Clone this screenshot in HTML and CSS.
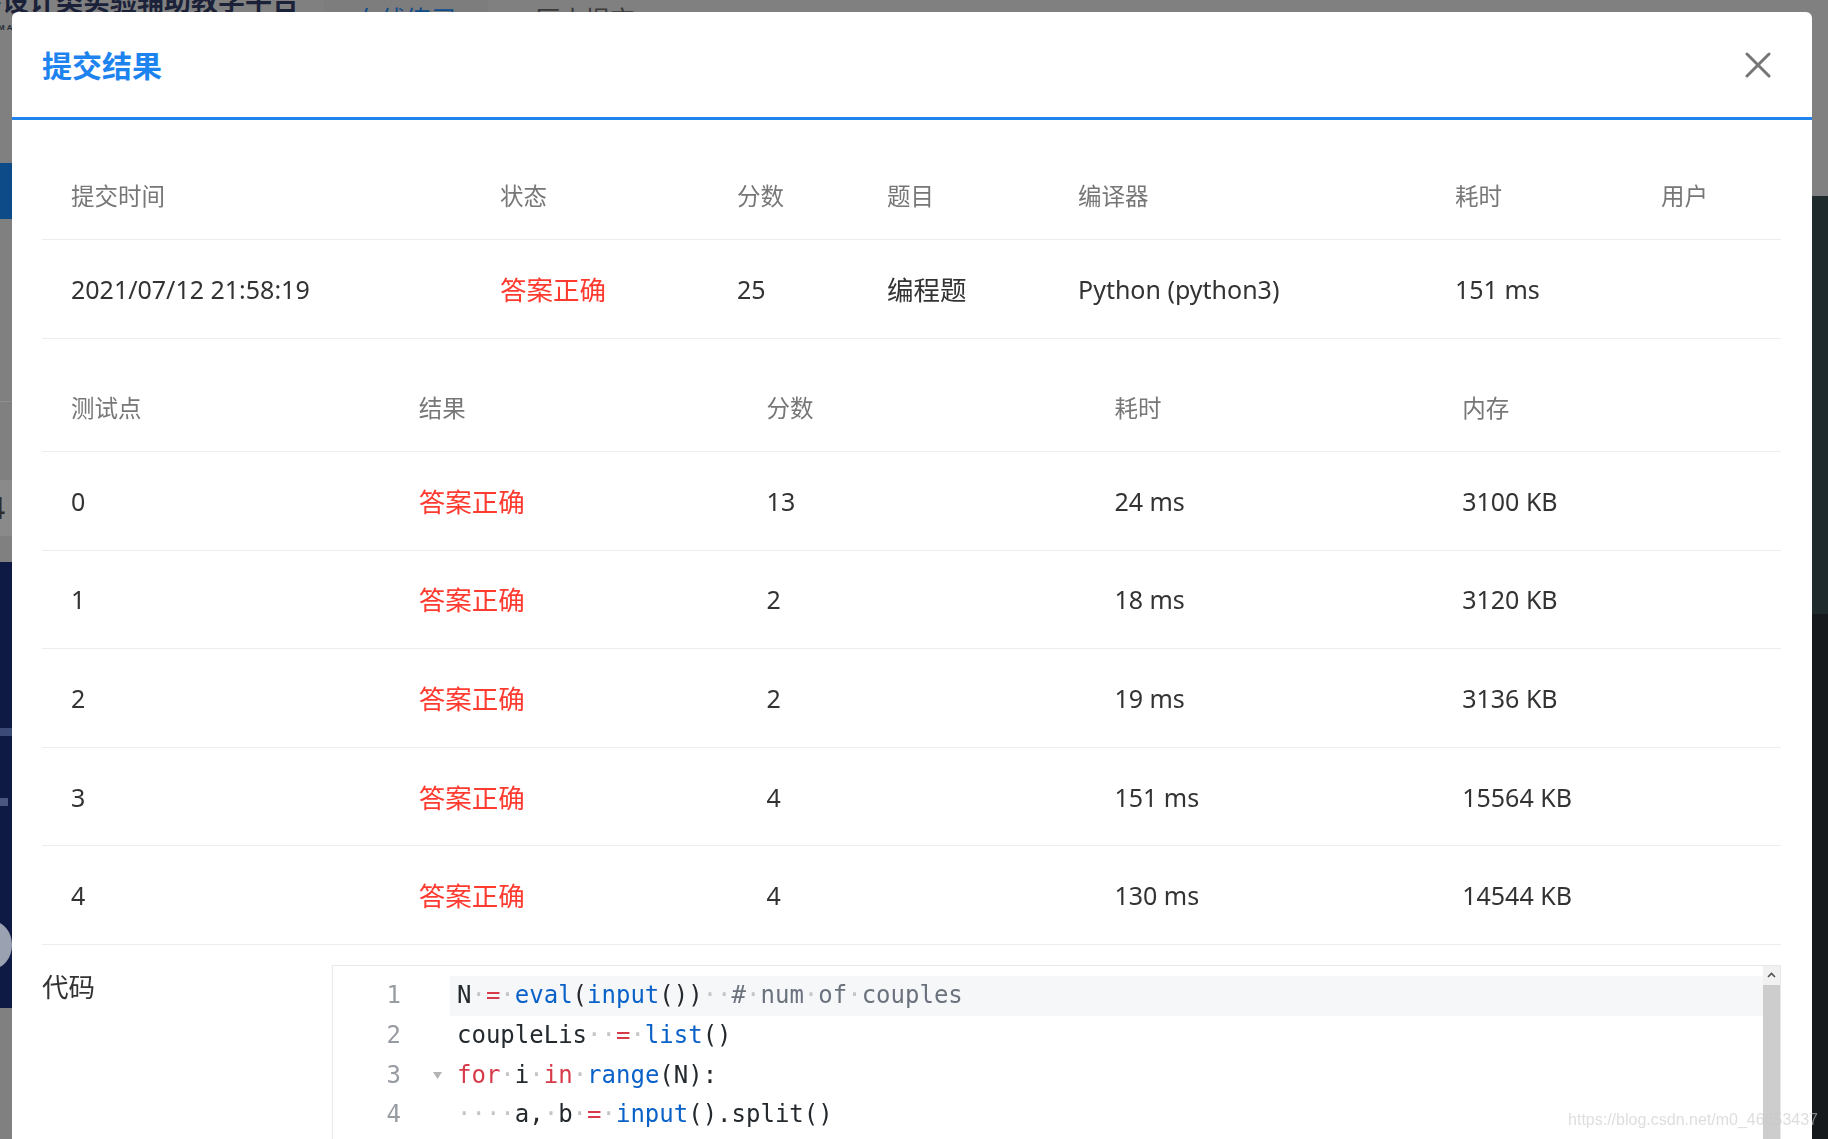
FILE: index.html
```html
<!DOCTYPE html>
<html lang="zh-CN">
<head>
<meta charset="utf-8">
<title>提交结果</title>
<link rel="stylesheet" href="styles.css">
</head>
<body>
<div class="page">
  <div class="page-left">
    <div class="brand">程序设计类实验辅助教学平台</div>
    <div class="brand-sub">MAKING PROGRAMMING EASY</div>
    <div class="nav-active"></div>
    <div class="divider"></div>
    <div class="stat">4</div>
    <div class="banner">
      <div class="banner-line one"></div>
      <div class="banner-line two"></div>
      <div class="banner-arc"></div>
    </div>
  </div>
  <div class="page-main">
    <div class="tabs">
      <div class="tab active">在线练习</div>
      <div class="tab">历史提交</div>
    </div>
  </div>
  <div class="page-right">
    <div class="pr-top"></div>
    <div class="pr-mid"></div>
    <div class="pr-bottom"></div>
  </div>
</div>

<div class="modal">
  <div class="modal-header">
    <div class="modal-title">提交结果</div>
    <div class="modal-close">
      <svg width="26" height="26" viewBox="0 0 26 26"><path d="M2 2 L24 24 M24 2 L2 24" stroke="#767676" stroke-width="3" stroke-linecap="round" fill="none"/></svg>
    </div>
  </div>
  <div class="modal-body">
    <div class="table t-summary">
      <div class="tr th">
        <div class="td">提交时间</div><div class="td">状态</div><div class="td">分数</div><div class="td">题目</div><div class="td">编译器</div><div class="td">耗时</div><div class="td">用户</div>
      </div>
      <div class="tr">
        <div class="td">2021/07/12 21:58:19</div><div class="td cjk red">答案正确</div><div class="td">25</div><div class="td cjk">编程题</div><div class="td">Python (python3)</div><div class="td">151 ms</div><div class="td"></div>
      </div>
    </div>

    <div class="table t-cases">
      <div class="tr th">
        <div class="td">测试点</div><div class="td">结果</div><div class="td">分数</div><div class="td">耗时</div><div class="td">内存</div>
      </div>
      <div class="tr"><div class="td">0</div><div class="td cjk red">答案正确</div><div class="td">13</div><div class="td">24 ms</div><div class="td">3100 KB</div></div>
      <div class="tr"><div class="td">1</div><div class="td cjk red">答案正确</div><div class="td">2</div><div class="td">18 ms</div><div class="td">3120 KB</div></div>
      <div class="tr"><div class="td">2</div><div class="td cjk red">答案正确</div><div class="td">2</div><div class="td">19 ms</div><div class="td">3136 KB</div></div>
      <div class="tr"><div class="td">3</div><div class="td cjk red">答案正确</div><div class="td">4</div><div class="td">151 ms</div><div class="td">15564 KB</div></div>
      <div class="tr"><div class="td">4</div><div class="td cjk red">答案正确</div><div class="td">4</div><div class="td">130 ms</div><div class="td">14544 KB</div></div>
    </div>

    <div class="code-sec">
      <div class="code-label">代码</div>
      <div class="editor">
        <div class="editor-lines">
          <div class="line active"><div class="ln">1</div><div class="fold"></div><div class="code">N<span class="ws">·</span><span class="kw">=</span><span class="ws">·</span><span class="bi">eval</span>(<span class="bi">input</span>())<span class="ws">··</span><span class="cm">#<span class="ws">·</span>num<span class="ws">·</span>of<span class="ws">·</span>couples</span></div></div>
          <div class="line"><div class="ln">2</div><div class="fold"></div><div class="code">coupleLis<span class="ws">··</span><span class="kw">=</span><span class="ws">·</span><span class="bi">list</span>()</div></div>
          <div class="line"><div class="ln">3</div><div class="fold"><svg width="9" height="7" viewBox="0 0 9 7"><path d="M0 0 L9 0 L4.5 7 Z" fill="#b4b4b4"/></svg></div><div class="code"><span class="kw">for</span><span class="ws">·</span>i<span class="ws">·</span><span class="kw">in</span><span class="ws">·</span><span class="bi">range</span>(N):</div></div>
          <div class="line"><div class="ln">4</div><div class="fold"></div><div class="code"><span class="ws">····</span>a,<span class="ws">·</span>b<span class="ws">·</span><span class="kw">=</span><span class="ws">·</span><span class="bi">input</span>().split()</div></div>
        </div>
        <div class="scrollbar">
          <div class="sb-up"><svg width="9" height="6" viewBox="0 0 9 6"><path d="M1 5 L4.5 1.5 L8 5" stroke="#505050" stroke-width="1.6" fill="none"/></svg></div>
          <div class="sb-thumb"></div>
        </div>
      </div>
    </div>
  </div>
</div>

<div class="watermark">https://blog.csdn.net/m0_46653437</div>
</body>
</html>
```

FILE: styles.css
```css
* { box-sizing: border-box; }
html, body { margin: 0; height: 100%; overflow: hidden; }
body {
  background: #808080;
  font-family: "Noto Sans", "Noto Sans CJK SC", sans-serif;
}

/* ---- dimmed page behind the dialog ---- */
.page { display: flex; height: 100vh; }
.page-left { width: 324px; flex: none; display: flex; flex-direction: column; }
.brand {
  margin-top: -15px;
  margin-left: -52px;
  font: 700 27px/30px "Noto Sans CJK SC", sans-serif;
  color: #1a2138;
  white-space: nowrap;
}
.brand-sub {
  margin-top: 8px;
  margin-left: -2px;
  font: 700 8px/10px "Liberation Sans", sans-serif;
  letter-spacing: 2px;
  color: #262b36;
  white-space: nowrap;
}
.nav-active { margin-top: 130px; height: 56px; background: #0d4a88; }
.divider { margin-top: 182px; height: 1px; background: #8d8d8d; }
.stat {
  margin-top: 78px;
  height: 56px;
  background: #8a8a8a;
  font: 30px/56px "Noto Sans", sans-serif;
  color: #2c2c2c;
  margin-left: -12px;
  white-space: nowrap;
}
.banner {
  margin-top: 26px;
  height: 446px;
  background: #0e1a44;
  display: flex;
  flex-direction: column;
}
.banner-line { height: 8px; width: 12px; background: #3c4a78; }
.banner-line.one { margin-top: 166px; }
.banner-line.two { margin-top: 62px; width: 8px; background: #4a5680; }
.banner-arc {
  margin-top: 115px;
  margin-left: -28px;
  width: 40px;
  height: 48px;
  border-radius: 50%;
  background: #9aa1b0;
}

.page-main { flex: 1; display: flex; flex-direction: column; }
.tabs { display: flex; height: 40px; }
.tab {
  width: 194px;
  padding-top: 3px;
  text-align: center;
  font: 25px/30px "Noto Sans CJK SC", sans-serif;
  color: #3a3a3a;
}
.tab.active { width: 164px; color: #0f4c8c; background: #7d7d7d; }

.page-right { width: 16px; flex: none; display: flex; flex-direction: column; }
.pr-top { height: 196px; background: #808080; }
.pr-mid { height: 418px; background: #1f2a2c; }
.pr-bottom { flex: 1; background: #161a1d; }

/* ---- dialog ---- */
.modal {
  position: fixed;
  top: 12px;
  left: 12px;
  width: 1800px;
  height: 1200px;
  background: #fff;
  border-radius: 6px 6px 0 0;
}
.modal-header {
  height: 108px;
  display: flex;
  align-items: center;
  justify-content: space-between;
  padding: 0 41px 0 30px;
  border-bottom: 3px solid #1f84ee;
}
.modal-title {
  font: 700 30px/1 "Noto Sans CJK SC", sans-serif;
  color: #1d83ef;
  margin-top: -1px;
}
.modal-close { width: 26px; height: 26px; display: flex; }

.modal-body { padding: 30px 31px 0 30px; }

.table .tr {
  display: grid;
  align-items: center;
  height: 98.6px;
  border-bottom: 1px solid #ebedf0;
}
.t-summary .tr { grid-template-columns: 429px 237px 150px 191px 377px 206px 1fr; height: 99px; }
.t-cases { margin-top: 23px; }
.t-cases .tr { grid-template-columns: repeat(5, 1fr); }
.table .tr.th { height: 90px; }

.td {
  padding-left: 29px;
  white-space: nowrap;
  font-size: 25px;
  line-height: 34px;
  color: #333;
}
.th .td {
  font: 23.5px/34px "Noto Sans CJK SC", sans-serif;
  color: #777;
}
.td.cjk { font-family: "Noto Sans CJK SC", sans-serif; font-size: 26.5px; }
.td.red { color: #ff3b30; }

/* ---- code ---- */
.code-sec {
  display: grid;
  grid-template-columns: 290px 1fr;
  margin-top: 20px;
}
.code-label {
  font: 26.5px/42px "Noto Sans CJK SC", sans-serif;
  color: #333;
}
.editor {
  height: 300px;
  border: 1px solid #e9e9e9;
  display: flex;
}
.editor-lines { flex: 1; padding-top: 10px; }
.line {
  display: flex;
  height: 39.8px;
  font: 24px/39.8px "DejaVu Sans Mono", "Liberation Mono", monospace;
}
.ln { width: 68px; text-align: right; color: #979ca3; }
.fold {
  width: 49px;
  display: flex;
  align-items: center;
  justify-content: flex-end;
  padding-right: 8px;
}
.code { flex: 1; padding-left: 7px; white-space: pre; color: #24292e; }
.line.active .code { background: #f6f7f9; }
.ws { color: #c3c5c8; }
.kw { color: #d73a49; }
.bi { color: #0a62c8; }
.cm { color: #6a737d; }

.scrollbar {
  width: 17px;
  flex: none;
  display: flex;
  flex-direction: column;
  background: #f1f1f1;
}
.sb-up { height: 18px; display: flex; align-items: center; justify-content: center; }
.sb-thumb { flex: 1; background: #cdcdcd; margin-top: 1px; }

.watermark {
  position: fixed;
  right: 10px;
  bottom: 10px;
  font: 16px/18px "Liberation Sans", sans-serif;
  color: rgba(200, 200, 200, 0.6);
  white-space: nowrap;
}
```
